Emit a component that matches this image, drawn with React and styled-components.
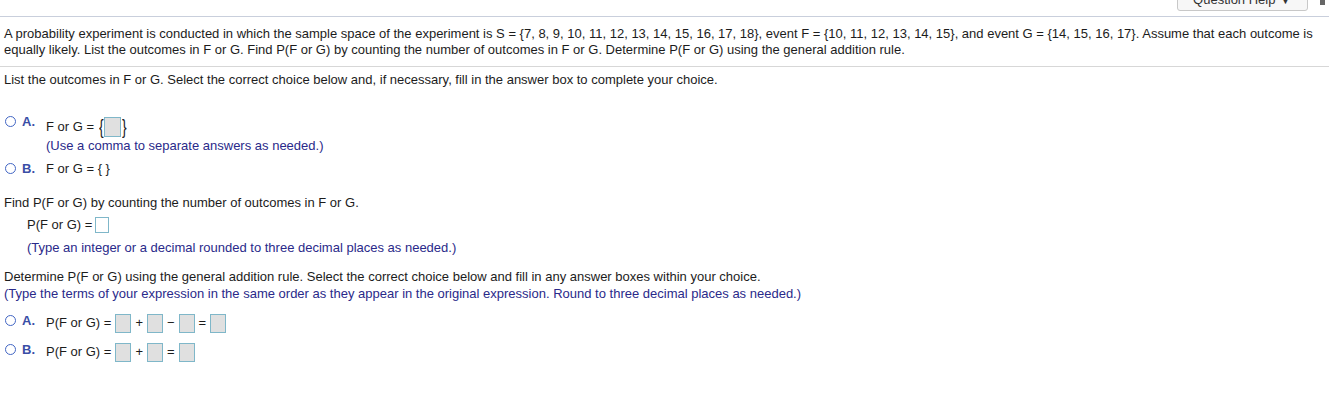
import styled, { createGlobalStyle } from 'styled-components';

const Global = createGlobalStyle`
	body {
		margin: 0;
		background: #fff;
		font-family: "Liberation Sans", Arial, sans-serif;
		font-size: 13px;
		color: #1c1c1c;
	}
`;

const TopBar = styled.div`
	height: 16px;
	border-bottom: 1px solid #c9cfdc;
	display: flex;
	justify-content: flex-end;
	align-items: flex-end;
	padding-right: 4px;
	overflow: hidden;
`;

const HelpButton = styled.div`
	height: 24px;
	width: 131px;
	margin-bottom: 5px;
	border: 1px solid #c8c8c8;
	border-radius: 3px;
	background: #f7f7f7;
	box-sizing: border-box;
	display: flex;
	align-items: center;
	justify-content: center;
	font-size: 13px;
	color: #333;
`;

const Extra = styled.div`
	align-self: flex-start;
	width: 5px;
	height: 5px;
	margin-left: 12px;
	background: #666;
`;

const Intro = styled.p`
	margin: 0;
	padding: 9px 12px 8px 4px;
	line-height: 16px;
	border-bottom: 1px solid #d7d7d7;
`;

const Body = styled.div`
	padding: 5px 4px 0 4px;
`;

const Line = styled.div`
	line-height: 16px;
	margin-top: ${(p) => p.$top || 0}px;
	padding-left: ${(p) => p.$indent || 0}px;
`;

const Hint = styled(Line)`
	color: #2a2a8a;
`;

const Choice = styled.div`
	display: flex;
	align-items: flex-start;
	margin-top: ${(p) => p.$top || 0}px;
`;

const Radio = styled.span`
	width: 9px;
	height: 9px;
	border: 1.5px solid #4266c4;
	border-radius: 50%;
	margin: ${(p) => p.$down || 0}px 0 0 1px;
	flex-shrink: 0;
`;

const Letter = styled.span`
	font-weight: bold;
	color: #3a4ea6;
	width: 24px;
	margin-left: 6px;
	line-height: 14px;
	margin-top: ${(p) => p.$down || 0}px;
`;

const ChoiceBody = styled.div`
	display: flex;
	flex-direction: column;
`;

const Expr = styled.div`
	display: flex;
	align-items: center;
	gap: ${(p) => (p.$gap === undefined ? 4 : p.$gap)}px;
	line-height: 16px;
	height: ${(p) => p.$h || 16}px;
	white-space: pre;
`;

const Box = styled.span`
	display: inline-block;
	box-sizing: border-box;
	width: ${(p) => p.$w || 16}px;
	height: ${(p) => p.$h || 19}px;
	border: 1px solid #7fb7c9;
	background: ${(p) => (p.$white ? '#fff' : '#e0e0e0')};
`;

const Brace = styled.span`
	font-size: 20px;
	line-height: 20px;
	display: inline-block;
	transform: scaleX(0.7);
	margin: 0 -1px;
`;

export default function App() {
	return (
		<>
			<Global />
			<TopBar>
				<HelpButton>Question Help ▼</HelpButton>
				<Extra />
			</TopBar>
			<Intro>
				A probability experiment is conducted in which the sample space of the experiment is S = {'{'}7, 8, 9, 10, 11, 12, 13, 14, 15, 16, 17, 18{'}'}, event F = {'{'}10, 11, 12, 13, 14, 15{'}'}, and event G = {'{'}14, 15, 16, 17{'}'}. Assume that each outcome is equally likely. List the outcomes in F or G. Find P(F or G) by counting the number of outcomes in F or G. Determine P(F or G) using the general addition rule.
			</Intro>
			<Body>
				<Line>List the outcomes in F or G. Select the correct choice below and, if necessary, fill in the answer box to complete your choice.</Line>

				<Choice $top={28}>
					<Radio />
					<Letter $down={-1}>A.</Letter>
					<ChoiceBody>
						<Expr $h={22} $gap={1}>
							<span>F or G = </span><Brace>{'{'}</Brace><Box $w={17} $h={20} /><Brace>{'}'}</Brace>
						</Expr>
						<Hint>(Use a comma to separate answers as needed.)</Hint>
					</ChoiceBody>
				</Choice>
				<Choice $top={7}>
					<Radio $down={2} />
					<Letter $down={1}>B.</Letter>
					<Expr>F or G = {'{ }'}</Expr>
				</Choice>

				<Line $top={18}>Find P(F or G) by counting the number of outcomes in F or G.</Line>
				<Line $top={6} $indent={23}>
					<Expr $gap={3}><span>P(F or G) =</span><Box $white $w={14} $h={16} /></Expr>
				</Line>
				<Hint $top={7} $indent={23}>(Type an integer or a decimal rounded to three decimal places as needed.)</Hint>

				<Line $top={13}>Determine P(F or G) using the general addition rule. Select the correct choice below and fill in any answer boxes within your choice.</Line>
				<Hint $top={1}>(Type the terms of your expression in the same order as they appear in the original expression. Round to three decimal places as needed.)</Hint>

				<Choice $top={11}>
					<Radio $down={2} />
					<Letter $down={1}>A.</Letter>
					<Expr $h={20}>
						<span>P(F or G) =</span><Box /><span>+</span><Box /><span>−</span><Box /><span>=</span><Box />
					</Expr>
				</Choice>
				<Choice $top={9}>
					<Radio $down={2} />
					<Letter $down={1}>B.</Letter>
					<Expr $h={20}>
						<span>P(F or G) =</span><Box /><span>+</span><Box /><span>=</span><Box />
					</Expr>
				</Choice>
			</Body>
		</>
	);
}
